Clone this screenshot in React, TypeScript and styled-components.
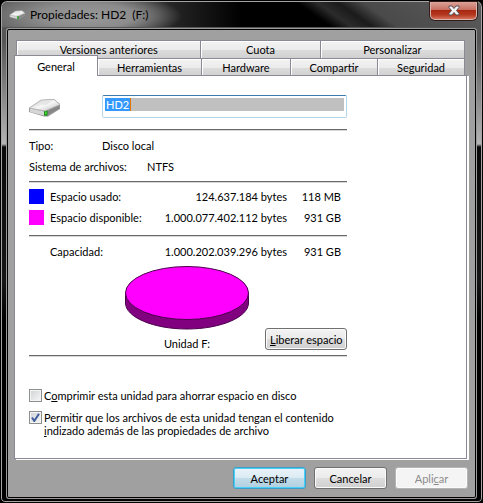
import React, { useState } from "react";
import styled, { createGlobalStyle } from "styled-components";

const line = "#8a8a96";

const GlobalStyle = createGlobalStyle`
  * { box-sizing: border-box; }
  body { margin: 0; background: #000; }
  body, button, input, table {
    font-family: Lato, "Liberation Sans", sans-serif;
    font-size: 11px;
    line-height: 13px;
    color: #000;
  }
`;

const Window = styled.main`
  display: flex;
  flex-direction: column;
  min-height: 100vh;
  padding: 0 5px 4px;
  border: 1px solid #000;
  border-radius: 7px 7px 5px 5px;
  box-shadow: inset 0 0 0 1px #a4a4a4;
  background: linear-gradient(#5a5a5a 0, #555 40px, #b4b4b4 143px, #0a0a0a 146px, #161616 280px, #000 320px);
`;

const TitleBar = styled.header`
  display: flex;
  align-items: center;
  height: 25px;
  margin: 1px -4px 0;
  padding: 0 4px 0 7px;
  border-radius: 6px 6px 0 0;
  background:
    radial-gradient(ellipse 95px 24px at 85px 14px, #999 0, #8c8c8c 50%, transparent 100%),
    linear-gradient(35deg, transparent 0 64%, #2b2b2b 68%, #1b1b1b 72%, #4a4a4a 77%, #5c5c5c 100%),
    linear-gradient(90deg, #666 0, #6b6b6b 90px, #252525 170px, #000 240px);
`;

const Title = styled.h1`
  flex: 1;
  margin: 1px 0 0 4px;
  font-size: 12px;
  line-height: 16px;
  font-weight: 400;
  white-space: pre;
`;

const CloseButton = styled.button`
  align-self: flex-start;
  display: grid;
  place-items: center;
  width: 47px;
  height: 18px;
  padding: 0;
  border: 1px solid #d5b6b0;
  border-top: 0;
  border-radius: 0 0 5px 5px;
  background: linear-gradient(#dba197 0, #c77062 45%, #a92711 50%, #b43720 75%, #d7705a 100%);
  box-shadow: 0 0 0 1px #351b18;
`;

const Client = styled.section`
  display: flex;
  flex: 1;
  flex-direction: column;
  padding: 10px 6px 8px;
  border: 1px solid #000;
  border-radius: 2px;
  background: #a0a0a0;
  box-shadow: 0 0 0 1px #999;
  margin: 2px 1px 0;
`;

const TabRow = styled.div<{ $columns: string; $front?: boolean }>`
  display: grid;
  grid-template-columns: ${(p) => p.$columns};
  height: ${(p) => (p.$front ? "17px" : "18px")};
  margin: ${(p) => (p.$front ? "0 4px 0 0" : "0 4px 0 2px")};
`;

const Tab = styled.button<{ $active?: boolean }>`
  position: relative;
  height: ${(p) => (p.$active ? "21px" : "18px")};
  margin-top: ${(p) => (p.$active ? "-3px" : "0")};
  padding: 0;
  border: 1px solid ${line};
  border-left-width: ${(p) => (p.$active ? "1px" : "0")};
  border-bottom: 0;
  background: ${(p) => (p.$active ? "#fff" : "linear-gradient(#f3f3f3 0, #ebebeb 50%, #dcdcdc 52%, #d0d0d0 100%)")};
  box-shadow: ${(p) => (p.$active ? "none" : "inset 1px 1px 0 #fff")};
  z-index: ${(p) => (p.$active ? 1 : 0)};

  &:first-child { border-left-width: 1px; }
`;

const Panel = styled.section`
  position: relative;
  flex: 1;
  margin-right: 2px;
  padding: 19px 14px;
  border: 1px solid ${line};
  background: #fff;
  box-shadow: 2px 1px 0 #fff;
`;

const Column = styled.div`
  max-width: 318px;
`;

const NameRow = styled.div`
  display: flex;
  align-items: flex-end;
  gap: 41px;
  padding-bottom: 11px;
`;

const NameField = styled.label`
  display: flex;
  flex: 1;
  height: 23px;
  padding: 2px;
  border: 1px solid #b5d6ea;
  border-top-color: #3d7bad;
  border-radius: 2px;
`;

const NameInput = styled.input`
  width: 26px;
  height: 13px;
  padding: 0 1px;
  border: 0;
  border-right: 1px solid #e07800;
  background: #3399ff;
  color: #fff;
  outline: 0;
`;

const FieldFill = styled.span`
  flex: 1;
  height: 13px;
  background: #c0c0c0;
`;

const Divider = styled.hr`
  height: 2px;
  margin: 0;
  border: 0;
  border-top: 1px solid #696969;
  border-bottom: 1px solid #d8d8d8;
`;

const Facts = styled.dl`
  display: grid;
  gap: 8px;
  margin: 0;
  padding: 8px 0;
`;

const Fact = styled.div<{ $label: number }>`
  display: grid;
  grid-template-columns: ${(p) => p.$label}px 1fr;
`;

const Term = styled.dt``;

const Detail = styled.dd`
  margin: 0;
`;

const Usage = styled.table<{ $top: number; $bottom: number }>`
  width: 100%;
  margin: ${(p) => p.$top}px 0 ${(p) => p.$bottom}px;
  border-collapse: collapse;
  table-layout: fixed;
`;

const UsageRow = styled.tr`
  height: 21px;
`;

const Key = styled.td`
  width: 21px;
  padding: 0;
`;

const Swatch = styled.span<{ $color: string }>`
  display: block;
  width: 15px;
  height: 15px;
  background: ${(p) => p.$color};
`;

const UsageName = styled.th`
  width: 100px;
  padding: 0;
  font-weight: 400;
  text-align: left;
`;

const Amount = styled.td<{ $wide?: boolean }>`
  width: ${(p) => (p.$wide ? "auto" : "60px")};
  padding: 0 ${(p) => (p.$wide ? 0 : 6)}px 0 0;
  text-align: right;
  white-space: nowrap;
`;

const ChartRow = styled.div`
  display: grid;
  grid-template-columns: 96px auto 1fr;
  align-items: end;
  padding-bottom: 5px;
`;

const Chart = styled.figure`
  grid-column: 2;
  display: flex;
  flex-direction: column;
  align-items: center;
  gap: 7px;
  margin: 0;
`;

const Button = styled.button<{ $primary?: boolean }>`
  height: 22px;
  padding: 0 4px;
  border: 1px solid ${(p) => (p.$primary ? "#3c9fc9" : "#707070")};
  border-radius: 3px;
  background: ${(p) =>
    p.$primary
      ? "linear-gradient(#eaf4f9 0, #dcebf3 48%, #c3dce9 52%, #b0d0e0 100%)"
      : "linear-gradient(#f3f3f3 0, #ebebeb 48%, #dddddd 52%, #cfcfcf 100%)"};
  box-shadow: inset 0 0 0 1px ${(p) => (p.$primary ? "#48d0f8" : "#fbfbfb")};
  white-space: nowrap;

  &:disabled {
    border-color: #b5b5b5;
    background: #f4f4f4;
    color: #8b8b8b;
  }
`;

const CleanButton = styled(Button)`
  justify-self: end;
  width: 82px;
`;

const Options = styled.div`
  display: grid;
  gap: 9px;
  padding-top: 32px;
`;

const Option = styled.label`
  display: flex;
  gap: 2px;
`;

const Box = styled.input`
  appearance: none;
  flex: none;
  width: 13px;
  height: 13px;
  margin: 0;
  border: 1px solid #8e8f8f;
  background: linear-gradient(135deg, #cfd3d6, #f6f6f6);
  box-shadow: inset 0 0 0 1px #f4f4f4;

  &:checked {
    background-image:
      url("data:image/svg+xml,%3Csvg xmlns='http://www.w3.org/2000/svg' viewBox='0 0 11 11'%3E%3Cpath d='M2 5.5 4.3 9 9 1.8' fill='none' stroke='%23405c9c' stroke-width='2'/%3E%3C/svg%3E"),
      linear-gradient(135deg, #cfd3d6, #f6f6f6);
  }
`;

const Actions = styled.footer`
  display: grid;
  grid-template-columns: repeat(3, 73px);
  justify-content: end;
  gap: 8px;
  padding: 8px 1px 0 0;
`;

function DriveIcon({ width, height }: { width: number; height: number }) {
  return (
    <svg width={width} height={height} viewBox="0 0 32 20" aria-hidden="true">
      <defs>
        <linearGradient id="lid" x1="0" y1="0" x2="1" y2="1">
          <stop offset="0" stopColor="#c2c2c2" />
          <stop offset="0.5" stopColor="#f7f7f7" />
          <stop offset="1" stopColor="#b8b8b8" />
        </linearGradient>
      </defs>
      <path d="M0 10 12 2 25 1 31 6 31 11 19 18.500 15 18.500 0 14Z" fill="#9a9a9a" />
      <path d="M.5 10 12 2 25 1.500 31 6.500 16 13Z" fill="url(#lid)" stroke="#b0b0b0" strokeWidth=".7" />
      <path d="M1 10.500 15 13.500V17.500L1 14Z" fill="#d6d6d6" />
      <path d="M17 13.500 30.500 7.500V10.500L18 17.500Z" fill="#868686" />
      <path d="M10 6 15 3 23 3.500 17 7Z" fill="#e6e6e6" />
      <path d="M15 13.500v4l3.500 .2V12.500z" fill="#168b16" />
      <path d="M16 13.500h1.500v3H16z" fill="#4be236" />
    </svg>
  );
}

function PieChart() {
  return (
    <svg width="124" height="64" viewBox="0 0 124 64" role="img" aria-label="Unidad F:">
      <path d="M.5 27V37C.5 51 28 63 62 63S123.500 51 123.500 37V27Z" fill="#800080" stroke="#4b004b" />
      <ellipse cx="62" cy="27" rx="61.500" ry="26.500" fill="#f0f" stroke="#4b004b" />
    </svg>
  );
}

export default function App() {
  const [compress, setCompress] = useState(false);
  const [index, setIndex] = useState(true);
  return (
    <>
      <GlobalStyle />
      <Window>
        <TitleBar>
          <DriveIcon width={17} height={10} />
          <Title>Propiedades: HD2  (F:)</Title>
          <CloseButton aria-label="Cerrar">
            <svg width="12" height="11" viewBox="0 0 12 11" aria-hidden="true">
              <path d="M1 1H4L6 3.500 8 1H11V2.500L8.500 5.500 11 8.500V10H8L6 7.500 4 10H1V8.500L3.500 5.500 1 2.500Z" fill="#f4f4f4" stroke="#5a4d55" />
            </svg>
          </CloseButton>
        </TitleBar>
        <Client>
          <TabRow $columns="185fr 119fr 144fr">
            <Tab>Versiones anteriores</Tab>
            <Tab>Cuota</Tab>
            <Tab>Personalizar</Tab>
          </TabRow>
          <TabRow $front $columns="84fr 104fr 89fr 87fr 87fr">
            <Tab $active>General</Tab>
            <Tab>Herramientas</Tab>
            <Tab>Hardware</Tab>
            <Tab>Compartir</Tab>
            <Tab>Seguridad</Tab>
          </TabRow>
          <Panel>
            <Column>
              <NameRow>
                <DriveIcon width={32} height={20} />
                <NameField>
                  <NameInput aria-label="Nombre" defaultValue="HD2" />
                  <FieldFill />
                </NameField>
              </NameRow>
              <Divider />
              <Facts>
                <Fact $label={73}>
                  <Term>Tipo:</Term>
                  <Detail>Disco local</Detail>
                </Fact>
                <Fact $label={118}>
                  <Term>Sistema de archivos:</Term>
                  <Detail>NTFS</Detail>
                </Fact>
              </Facts>
              <Divider />
              <Usage $top={3} $bottom={7}>
                <tbody>
                  <UsageRow>
                    <Key><Swatch $color="#00f" /></Key>
                    <UsageName scope="row">Espacio usado:</UsageName>
                    <Amount $wide>124.637.184 bytes</Amount>
                    <Amount>118 MB</Amount>
                  </UsageRow>
                  <UsageRow>
                    <Key><Swatch $color="#f0f" /></Key>
                    <UsageName scope="row">Espacio disponible:</UsageName>
                    <Amount $wide>1.000.077.402.112 bytes</Amount>
                    <Amount>931 GB</Amount>
                  </UsageRow>
                </tbody>
              </Usage>
              <Divider />
              <Usage $top={4} $bottom={4}>
                <tbody>
                  <UsageRow>
                    <Key />
                    <UsageName scope="row">Capacidad:</UsageName>
                    <Amount $wide>1.000.202.039.296 bytes</Amount>
                    <Amount>931 GB</Amount>
                  </UsageRow>
                </tbody>
              </Usage>
              <ChartRow>
                <Chart>
                  <PieChart />
                  <figcaption>Unidad F:</figcaption>
                </Chart>
                <CleanButton><u>L</u>iberar espacio</CleanButton>
              </ChartRow>
              <Divider />
              <Options>
                <Option>
                  <Box type="checkbox" checked={compress} onChange={(e) => setCompress(e.target.checked)} />
                  <span>C<u>o</u>mprimir esta unidad para ahorrar espacio en disco</span>
                </Option>
                <Option>
                  <Box type="checkbox" checked={index} onChange={(e) => setIndex(e.target.checked)} />
                  <span>
                    Permitir que los archivos de esta unidad tengan el contenido <br />
                    <u>i</u>ndizado además de las propiedades de archivo
                  </span>
                </Option>
              </Options>
            </Column>
          </Panel>
          <Actions>
            <Button $primary>Aceptar</Button>
            <Button>Cancelar</Button>
            <Button disabled>Apli<u>c</u>ar</Button>
          </Actions>
        </Client>
      </Window>
    </>
  );
}
